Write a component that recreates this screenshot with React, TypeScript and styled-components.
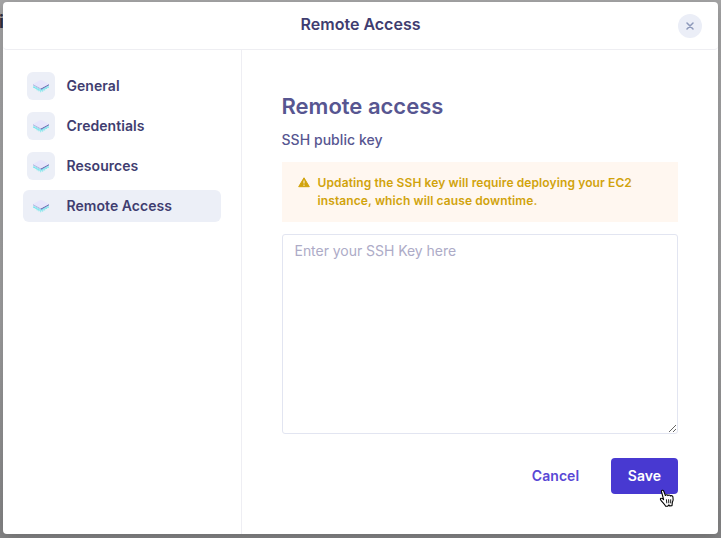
import React from 'react';
import styled, { createGlobalStyle } from 'styled-components';

const GlobalStyle = createGlobalStyle`
  * { box-sizing: border-box; }
  body { margin: 0; overflow: hidden; font-family: Inter, sans-serif; -webkit-font-smoothing: antialiased; }
  button { font-family: inherit; border: 0; padding: 0; background: none; cursor: pointer; }
`;

const Backdrop = styled.div`
  position: relative;
  width: 721px;
  height: 538px;
  padding: 2px 3px 4px;
  background: linear-gradient(#a5a5a6, #9e9e9f 60%, #858586);
  overflow: hidden;
`;

const PageText = styled.span`
  position: absolute;
  left: -1px;
  top: 12px;
  font-size: 18px;
  line-height: 20px;
  font-weight: 700;
  color: #30303f;
`;

const Modal = styled.section`
  position: relative;
  display: flex;
  flex-direction: column;
  height: 532px;
  border-radius: 4px;
  background: #fff;
  box-shadow: 0 4px 14px rgba(0, 0, 0, 0.18);
`;

const Header = styled.header`
  display: grid;
  grid-template-columns: 40px 1fr 24px;
  align-items: center;
  height: 48px;
  padding: 0 16px 0 0;
  border-bottom: 1px solid #eeeef2;
  border-radius: 4px;
`;

const Title = styled.h1`
  grid-column: 2;
  margin: 0;
  padding-bottom: 4px;
  text-align: center;
  font-size: 16px;
  line-height: 20px;
  font-weight: 600;
  letter-spacing: 0;
  color: #3f3d70;
`;

const CloseButton = styled.button`
  display: flex;
  align-items: center;
  justify-content: center;
  width: 24px;
  height: 24px;
  border-radius: 50%;
  background: #ebeef7;
`;

const Body = styled.div`
  display: flex;
  flex: 1;
`;

const Sidebar = styled.nav`
  display: flex;
  flex-direction: column;
  gap: 8px;
  width: 239px;
  padding: 20px 20px 0;
  border-right: 1px solid #eeeef3;
`;

const NavItem = styled.button<{ $active?: boolean }>`
  display: flex;
  align-items: center;
  gap: 11.5px;
  height: 32px;
  padding: 0 4px;
  border-radius: 6px;
  background: ${({ $active }) => ($active ? '#eceff7' : 'transparent')};
  font-size: 14px;
  line-height: 20px;
  font-weight: 600;
  letter-spacing: 0.05px;
  color: #3f3d70;
`;

const IconTile = styled.span`
  display: flex;
  align-items: center;
  justify-content: center;
  width: 28px;
  height: 28px;
  border-radius: 6px;
  background: #eceff7;
`;

const Content = styled.main`
  flex: 1;
  padding: 42px 40px 0;
`;

const Heading = styled.h2`
  margin: 0 0 0 -0.5px;
  font-size: 22px;
  line-height: 28px;
  font-weight: 600;
  letter-spacing: 0;
  color: #575691;
`;

const Label = styled.label`
  display: block;
  margin: 10px 0 0 -0.5px;
  font-size: 14px;
  line-height: 20px;
  font-weight: 500;
  letter-spacing: 0.05px;
  color: #575691;
`;

const Warning = styled.div`
  display: flex;
  gap: 7.5px;
  height: 60px;
  margin-top: 12px;
  padding: 12px 16px;
  background: #fff7f0;
  font-size: 12px;
  line-height: 18px;
  font-weight: 600;
  letter-spacing: 0.11px;
  color: #d1a30c;

  svg { flex: none; margin-top: 3px; }
`;

const KeyInput = styled.textarea`
  display: block;
  width: 396px;
  height: 200px;
  margin-top: 12px;
  padding: 6px 11.5px;
  border: 1px solid #e2e5f1;
  border-radius: 3px;
  outline: none;
  background: #fff;
  font-family: inherit;
  font-size: 14px;
  line-height: 20px;
  letter-spacing: -0.04px;
  color: #3f3d70;

  &::placeholder { color: #adabc7; opacity: 1; }
`;

const Actions = styled.footer`
  display: flex;
  justify-content: flex-end;
  gap: 16px;
  margin-top: 24px;
`;

const Button = styled.button<{ $primary?: boolean }>`
  width: ${({ $primary }) => ($primary ? '67px' : '79px')};
  height: 36px;
  border-radius: 4px;
  background: ${({ $primary }) => ($primary ? '#4839d1' : 'transparent')};
  color: ${({ $primary }) => ($primary ? '#fff' : '#5848d5')};
  font-size: 14px;
  line-height: 20px;
  font-weight: 600;
  letter-spacing: 0.05px;
`;

const Pointer = styled.svg`
  position: absolute;
  left: 658.5px;
  top: 489px;
`;

const LayerIcon = () => (
  <svg width="16" height="16" viewBox="0 0 16 16">
    <path d="M0 7 8 11l8-4v2.500L8 13.500 0 9.500z" fill="#b9f0f4" />
    <path d="M.5 9 8 12.400 15.500 9" fill="none" stroke="#62dce8" strokeWidth="1.300" strokeDasharray="1.300 .9" />
    <path d="M3.500 11.700 8 14l4.500-2.300" fill="none" stroke="#7ee8ea" strokeWidth="1" strokeDasharray="1 1" />
    <path d="M0 6 8 10.300v1.200L0 7.200z" fill="#b5b5e2" />
    <path d="M8 10.300 16 6v1.300l-8 4.400z" fill="#7370b8" />
    <path d="M0 6 8 1.800 16 6l-8 4.300z" fill="#e7e5fb" />
  </svg>
);

const items = ['General', 'Credentials', 'Resources', 'Remote Access'];

export default function App() {
  return (
    <>
      <GlobalStyle />
      <Backdrop>
        <PageText>i</PageText>
        <Modal>
          <Header>
            <Title>Remote Access</Title>
            <CloseButton aria-label="Close">
              <svg width="8" height="8" viewBox="0 0 8 8" stroke="#8d99ba" strokeWidth="1.500" strokeLinecap="round">
                <path d="m1 1 6 6M7 1 1 7" />
              </svg>
            </CloseButton>
          </Header>
          <Body>
            <Sidebar>
              {items.map((item) => (
                <NavItem key={item} $active={item === 'Remote Access'}>
                  <IconTile><LayerIcon /></IconTile>
                  {item}
                </NavItem>
              ))}
            </Sidebar>
            <Content>
              <Heading>Remote access</Heading>
              <Label htmlFor="ssh-key">SSH public key</Label>
              <Warning>
                <svg width="12" height="11" viewBox="0 0 12 11">
                  <path d="M6 .8 11.300 9.700H.7z" fill="#d1a30c" stroke="#d1a30c" strokeLinejoin="round" />
                  <path d="M6 3.500v3" stroke="#fff7f0" strokeWidth="1" />
                  <circle cx="6" cy="8.200" r=".65" fill="#fff7f0" />
                </svg>
                <span>Updating the SSH key will require deploying your EC2<br />instance, which will cause downtime.</span>
              </Warning>
              <KeyInput id="ssh-key" placeholder="Enter your SSH Key here" />
              <Actions>
                <Button>Cancel</Button>
                <Button $primary>Save</Button>
              </Actions>
            </Content>
          </Body>
        </Modal>
        <Pointer width="17" height="19" viewBox="0 0 17 19">
          <path
            d="M4.600 10.600 3 4.500 2.400 2.600C2.200 1 4.200.7 4.800 2.200L6.400 6.500c.5-1.200 2.100-1 2.500.1.600-1 2.100-.8 2.500.4.800-.8 2.200-.3 2.500.9.500 2 .4 3.800-.6 5.700l-.3 3.100-2.400.2-.7-1-1.100 1.300H6.700C5.900 15.400 4 13.800 2 11.400.2 9 2.600 8.500 4.600 10.600z"
            fill="#fff" stroke="#000" strokeWidth="1.100" strokeLinejoin="round"
          />
          <path d="m7.400 10.300.4 4M9.600 10.300l.2 4M11.700 10.300v4" stroke="#000" strokeWidth=".9" />
        </Pointer>
      </Backdrop>
    </>
  );
}
